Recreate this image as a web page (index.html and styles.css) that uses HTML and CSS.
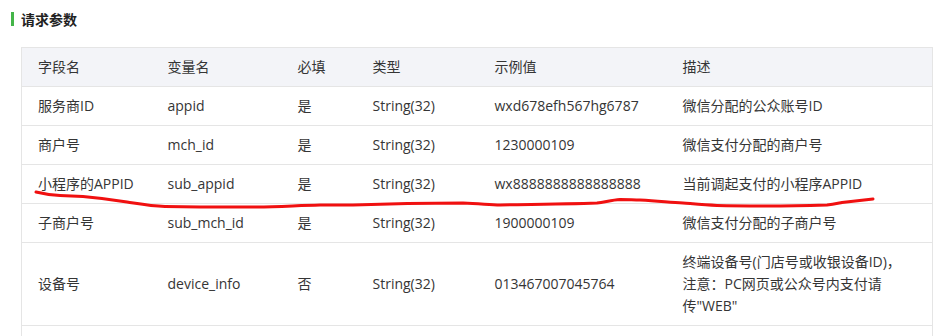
FILE: index.html
```html
<!DOCTYPE html>
<html lang="zh-CN">
<head>
<meta charset="utf-8">
<title>请求参数</title>
<link rel="stylesheet" href="styles.css">
</head>
<body>
<div class="page">
  <h3 class="section-title">请求参数</h3>
  <table class="params">
    <colgroup>
      <col class="c-name"><col class="c-var"><col class="c-req"><col class="c-type"><col class="c-ex"><col class="c-desc">
    </colgroup>
    <thead>
      <tr><th>字段名</th><th>变量名</th><th>必填</th><th>类型</th><th>示例值</th><th>描述</th></tr>
    </thead>
    <tbody>
      <tr><td>服务商ID</td><td>appid</td><td>是</td><td>String(32)</td><td>wxd678efh567hg6787</td><td>微信分配的公众账号ID</td></tr>
      <tr><td>商户号</td><td>mch_id</td><td>是</td><td>String(32)</td><td>1230000109</td><td>微信支付分配的商户号</td></tr>
      <tr><td>小程序的APPID</td><td>sub_appid</td><td>是</td><td>String(32)</td><td>wx8888888888888888</td><td>当前调起支付的小程序APPID</td></tr>
      <tr><td>子商户号</td><td>sub_mch_id</td><td>是</td><td>String(32)</td><td>1900000109</td><td>微信支付分配的子商户号</td></tr>
      <tr><td>设备号</td><td>device_info</td><td>否</td><td>String(32)</td><td>013467007045764</td><td>终端设备号(门店号或收银设备ID)，<br>注意：PC网页或公众号内支付请<br>传"WEB"</td></tr>
      <tr class="cut"><td></td><td></td><td></td><td></td><td></td><td></td></tr>
    </tbody>
  </table>
  <svg class="scribble" width="939" height="336" viewBox="0 0 939 336" aria-hidden="true">
    <path d="M36 192 C44 194 50 195 60 195.5 L83 196.5 C100 198 115 200 127 202 C140 204 150 206 165 206.5 L200 207 L257 207 C280 206.5 300 205.5 320 205 L353 205 C380 204 430 203 463 203 C480 203.5 490 205 500 205 C530 204.5 570 204 597 203 C605 202 612 200 620 199.5 C628 199.5 634 200 640 200 C660 201 670 202.5 683 203 C695 204 705 205 717 205.5 C735 206 750 206 767 206 C790 206 810 205.5 827 205 C833 204.5 837 203.5 842 202.5 C855 201 865 200 873 199" fill="none" stroke="#f01010" stroke-width="3" stroke-linecap="round" stroke-linejoin="round"/>
  </svg>
</div>
</body>
</html>
```
FILE: styles.css
```css
html, body {
  margin: 0;
  padding: 0;
  background: #fff;
}
.page {
  position: relative;
  width: 939px;
  height: 336px;
  overflow: hidden;
  padding: 12px 0 0 11px;
  box-sizing: border-box;
  font-family: "Open Sans", "Noto Sans CJK SC", sans-serif;
  font-size: 14px;
  color: #353535;
}
.section-title {
  margin: 0;
  padding-left: 7px;
  border-left: 3px solid #44b549;
  font-size: 14px;
  line-height: 14px;
  height: 14px;
  font-weight: bold;
  color: #222;
  font-family: "Noto Sans CJK SC", sans-serif;
}
.params {
  margin: 21px 0 0 10px;
  border-collapse: collapse;
  table-layout: fixed;
  width: 911px;
  border: 1px solid #e5e5e5;
}
.c-name { width: 130px; }
.c-var { width: 130px; }
.c-req { width: 75px; }
.c-type { width: 122px; }
.c-ex { width: 188px; }
.c-desc { width: 266px; }
.params th,
.params td {
  padding: 8px 16px;
  line-height: 22px;
  height: 22px;
  text-align: left;
  font-weight: normal;
  border-top: 1px solid #e5e5e5;
  white-space: nowrap;
  vertical-align: middle;
}
.params thead th {
  background: #f3f4f8;
  border-top: none;
}
.scribble {
  position: absolute;
  left: 0;
  top: 0;
  pointer-events: none;
}
```
